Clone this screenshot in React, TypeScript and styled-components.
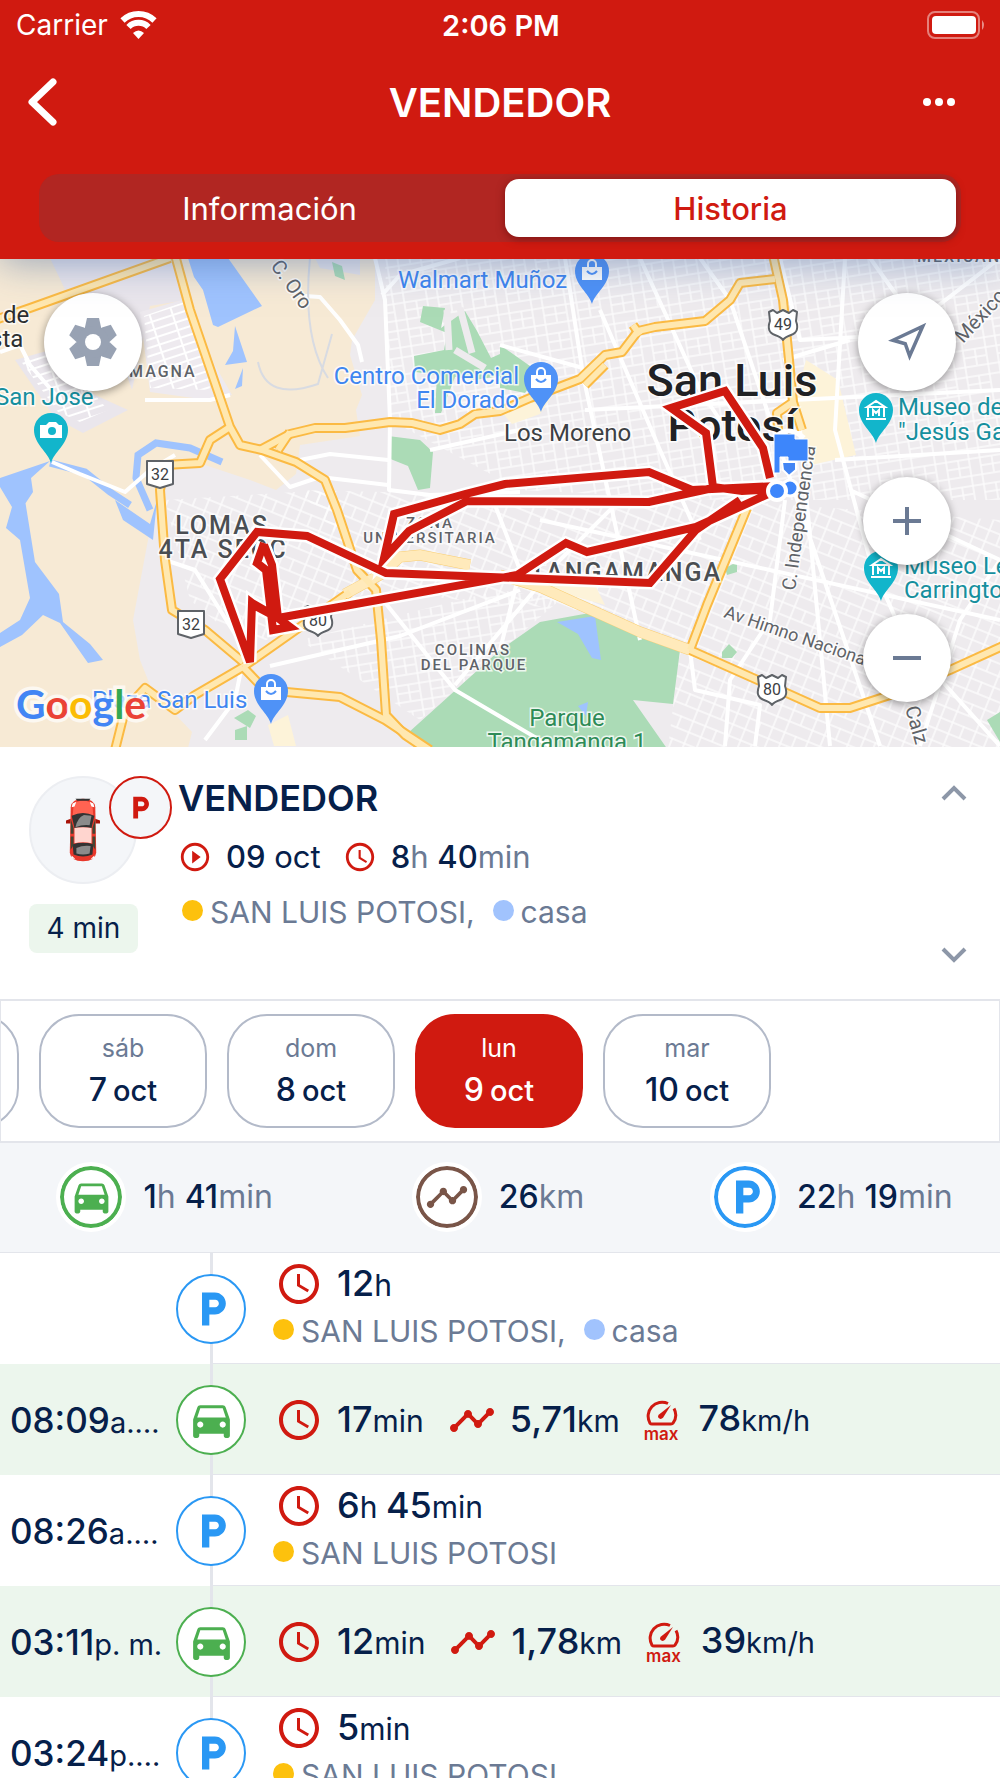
import React from "react";
import styled, { createGlobalStyle } from "styled-components";
import { MdAccessTime, MdDirectionsCar, MdLocalParking, MdPlayCircleOutline, MdTimeline } from "react-icons/md";

const color = {
  red: "#d01a10",
  navy: "#06204a",
  slate: "#6b7a94",
  line: "#e3e5eb",
  mist: "#f4f6f9",
  mint: "#ecf6ed",
  green: "#4caf50",
  blue: "#2a98f4",
  brown: "#795548",
  amber: "#fdc10d",
  sky: "#a1c3fd",
};

const GlobalStyle = createGlobalStyle`
  *, *::before, *::after { box-sizing: border-box; }
  body {
    margin: 0;
    background: #fff;
    color: ${color.navy};
    font-family: Inter, "Liberation Sans", sans-serif;
  }
  button { font: inherit; color: inherit; border: 0; padding: 0; background: none; cursor: pointer; }
  svg { display: block; flex: none; }
  h1, h2, p, ul, ol { margin: 0; padding: 0; }
  ul, ol { list-style: none; }
`;

const Screen = styled.div`
  display: flex;
  flex-direction: column;
  height: 100vh;
  overflow: hidden;
`;

/* Header */

const Header = styled.header`
  position: relative;
  z-index: 1;
  flex: none;
  height: 259px;
  background: ${color.red};
  color: #fff;
  box-shadow: 0 4px 36px rgba(60, 100, 160, 0.5);
`;

const StatusBar = styled.div`
  display: grid;
  grid-template-columns: 1fr auto 1fr;
  align-items: center;
  height: 50px;
  padding: 0 14px 0 16px;
  font-size: 28px;
`;

const Carrier = styled.div`
  display: flex;
  align-items: center;
  gap: 12px;
`;

const Clock = styled.time`
  font-size: 29px;
  font-weight: 600;
`;

const Battery = styled.svg`
  justify-self: end;
`;

const TitleBar = styled.div`
  display: grid;
  grid-template-columns: 1fr auto 1fr;
  align-items: center;
  height: 104px;
  padding: 0 26px;
`;

const Title = styled.h1`
  font-size: 40px;
  font-weight: 600;
`;

const IconButton = styled.button<{ $end?: boolean }>`
  justify-self: ${(p) => (p.$end ? "end" : "start")};
`;

const Segments = styled.div`
  display: grid;
  grid-template-columns: 1fr 1fr;
  gap: 10px;
  height: 68px;
  margin: 20px 39px 0;
  padding: 5px;
  border-radius: 20px;
  background: #b12622;
`;

const Segment = styled.button<{ $active?: boolean }>`
  border-radius: 14px;
  font-size: 31px;
  font-weight: ${(p) => (p.$active ? 500 : 400)};
  color: ${(p) => (p.$active ? color.red : "#fff")};
  background: ${(p) => (p.$active ? "#fff" : "transparent")};
  box-shadow: ${(p) => (p.$active ? "0 2px 8px rgba(80, 0, 0, 0.5)" : "none")};
`;

/* Map */

const MapPane = styled.section`
  position: relative;
  flex: none;
  height: 488px;
  overflow: hidden;
`;

const MapCanvas = styled.svg`
  width: 100%;
  height: 100%;
`;

const MapControls = styled.div`
  position: absolute;
  inset: 0;
  display: flex;
  justify-content: space-between;
  align-items: flex-start;
  padding: 34px 44px;
`;

const ControlColumn = styled.div`
  display: flex;
  flex-direction: column;
  align-items: center;
`;

const RoundButton = styled.button<{ $size: number; $gap?: number }>`
  display: grid;
  place-items: center;
  width: ${(p) => p.$size}px;
  height: ${(p) => p.$size}px;
  margin-top: ${(p) => p.$gap ?? 0}px;
  border-radius: 50%;
  background: #fff;
  box-shadow: 0 2px 8px rgba(0, 0, 0, 0.4);
`;

/* Vehicle summary */

const Summary = styled.section`
  display: flex;
  flex: none;
  height: 252px;
  padding: 29px 32px 0 29px;
`;

const AvatarColumn = styled.div`
  display: flex;
  flex-direction: column;
  gap: 20px;
  width: 109px;
`;

const Avatar = styled.div`
  position: relative;
  display: grid;
  place-items: center;
  width: 108px;
  height: 108px;
  border: 2px solid #eceef2;
  border-radius: 50%;
  background: ${color.mist};
`;

const ParkedBadge = styled.span`
  position: absolute;
  top: -2px;
  left: 78px;
  display: grid;
  place-items: center;
  width: 63px;
  height: 63px;
  border: 2px solid ${color.red};
  border-radius: 50%;
  background: ${color.mist};
  color: ${color.red};
`;

const Elapsed = styled.span`
  width: 100%;
  border-radius: 8px;
  background: ${color.mint};
  font-size: 28px;
  line-height: 49px;
  text-align: center;
`;

const SummaryText = styled.div`
  flex: 1;
  padding-left: 40px;
  & > p { padding-left: 4px; }
`;

const VehicleName = styled.h2`
  font-size: 36px;
  line-height: 44px;
  font-weight: 600;
`;

const MetaRow = styled.div`
  display: flex;
  align-items: center;
  gap: 14px;
  margin: 18px 0 17px;
  font-size: 31px;
  line-height: 38px;
  svg { color: ${color.red}; }
`;

const Meta = styled.span`
  margin-right: 8px;
`;

const Arrows = styled.div`
  display: flex;
  flex-direction: column;
  justify-content: space-between;
  padding: 8px 0 34px;
`;

const Unit = styled.span<{ $soft?: boolean; $size?: number }>`
  font-size: ${(p) => p.$size ?? 31}px;
  font-weight: 400;
  color: ${(p) => (p.$soft ? color.slate : color.navy)};
`;

const Num = styled.span`
  font-weight: 500;
`;

const Places = styled.p`
  display: flex;
  align-items: center;
  font-size: 30px;
  line-height: 38px;
  color: ${color.slate};
`;

const Place = styled.span<{ $dot: string }>`
  display: flex;
  align-items: center;
  margin-right: 18px;
  &::before {
    content: "";
    width: 21px;
    height: 21px;
    margin: 0 7px 4px 0;
    border-radius: 50%;
    background: ${(p) => p.$dot};
  }
`;

/* Day picker */

const DayStrip = styled.nav`
  flex: none;
  height: 144px;
  overflow: hidden;
  border: 1px solid ${color.line};
  border-width: 2px 1px;
`;

const Days = styled.ul`
  display: flex;
  gap: 20px;
  margin-left: -150px;
  padding-top: 13px;
`;

const Day = styled.button<{ $active?: boolean }>`
  display: flex;
  flex-direction: column;
  justify-content: center;
  align-items: center;
  gap: 7px;
  width: 168px;
  height: 114px;
  border: 2px solid ${(p) => (p.$active ? color.red : "#b3bac9")};
  border-radius: 40px;
  background: ${(p) => (p.$active ? color.red : "#fff")};
  color: ${(p) => (p.$active ? "#fff" : color.navy)};
  font-size: 29px;
  line-height: 38px;
  font-weight: 500;
`;

const Weekday = styled.span<{ $active?: boolean }>`
  font-size: 25px;
  line-height: 32px;
  font-weight: 400;
  color: ${(p) => (p.$active ? "#fff" : color.slate)};
`;

const DayDate = styled.span`
  display: flex;
  align-items: baseline;
  gap: 6px;
`;

const DayNumber = styled.span`
  font-size: 32px;
`;

/* Totals */

const Totals = styled.section`
  display: grid;
  grid-template-columns: repeat(3, 1fr);
  flex: none;
  height: 110px;
  border-bottom: 1px solid ${color.line};
  background: ${color.mist};
`;

const Total = styled.div`
  display: flex;
  justify-content: center;
  align-items: center;
  gap: 17px;
  padding: 0 4px 2px 0;
  font-size: 32px;
`;

const Ring = styled.span<{ $color: string; $bold?: boolean }>`
  position: relative;
  display: grid;
  place-items: center;
  flex: none;
  width: 70px;
  height: 70px;
  border: ${(p) => (p.$bold ? "4px solid #fff" : `2px solid ${p.$color}`)};
  border-radius: 50%;
  background: #fff;
  color: ${(p) => p.$color};
  box-shadow: ${(p) => (p.$bold ? `inset 0 0 0 4px ${p.$color}` : "none")};
`;

const ParkingIcon = styled(MdLocalParking)`
  margin-left: 4px;
`;

/* Timeline */

const Timeline = styled.ol`
  flex: 1;
  min-height: 0;
  overflow: hidden;
`;

const Entry = styled.li<{ $moving?: boolean }>`
  display: grid;
  grid-template-columns: 176px 70px 1fr;
  align-items: stretch;
  height: 111px;
  background: ${(p) => (p.$moving ? color.mint : "#fff")};
`;

const EntryTime = styled.time`
  align-self: center;
  padding-left: 10px;
  font-size: 35px;
  font-weight: 500;
  white-space: nowrap;
`;

const Rail = styled.div`
  display: grid;
  place-items: center;
  background: linear-gradient(${color.line}, ${color.line}) center / 3px 100% no-repeat;
`;

const EntryBody = styled.div`
  display: flex;
  flex-direction: column;
  justify-content: center;
  gap: 4px;
  margin-left: -34px;
  padding: 0 0 6px 61px;
  border-bottom: 1px solid ${color.line};
`;

const TripBody = styled(EntryBody)`
  padding: 1px 0 0 61px;
`;

const Metrics = styled.div`
  display: flex;
  align-items: center;
  gap: 24px;
  padding-left: 2px;
  font-size: 36px;
  line-height: 42px;
`;

const Metric = styled.span<{ $wide?: boolean }>`
  display: flex;
  align-items: center;
  gap: ${(p) => (p.$wide ? 20 : 14)}px;
  svg { color: ${color.red}; }
`;

const MaxSpeed = styled.span`
  display: flex;
  flex-direction: column;
  align-items: center;
  gap: 1px;
  padding-top: 2px;
  color: ${color.red};
  font-size: 17px;
  line-height: 15px;
  font-weight: 600;
`;

const Car = () => (
  <svg width="34" height="68" viewBox="0 0 36 68">
    <path d="M0 24l5-2v5H0zM36 24l-5-2v5h5z" fill="#a81208" />
    <path d="M5 10Q6 1 18 1t13 9l1 48q-1 9-14 9T4 58z" fill="#e8382b" />
    <path d="M8 8Q10 3 18 3t10 5l1 12Q18 13 7 20z" fill="#ff6352" />
    <path d="M10 1h16l-2 2H12z" fill="#333" />
    <path d="M6 19Q18 13 30 19l-3 13Q18 30 9 32zM7 49q11-3 22 0l-1 11q-10 4-20 0z" fill="#333" />
    <path d="M10 31q2-10 9-13l8 1-2 10Q18 28 10 31zM11 53q7-3 15-2l-1 8q-7 2-14 0z" fill="#8b8b8b" />
    <path d="M9 32q9-2 18 0v16q-9-2-18 0z" fill="#ffd5cf" />
    <path d="M5 22l3 10v6H5zM31 22l-3 10v6h3zM5 41h3v9l-3 5zM31 41h-3v9l3 5z" fill="#443" />
    <path d="M6 10l1-4 4-2-2 5zM30 10l-1-4-4-2 2 5zM6 61l4 4-4-1zM30 61l-4 4 4-1z" fill="#fff" />
  </svg>
);

const Gauge = () => (
  <svg width="33" height="26" viewBox="0 0 33 26" fill="none" stroke="currentColor" strokeWidth="3">
    <path d="M23 3.500A14 14 0 0 0 5 23.200q.7.8 2 .8h19q1.400 0 2-.8A14 14 0 0 0 29 8.500" />
    <path d="M26 5L14 14.500q-2 2 0 3.800 2 1.500 4-.5z" fill="currentColor" stroke="none" />
  </svg>
);

const Chevron = ({ down }: { down?: boolean }) => (
  <svg width="28" height="20" viewBox="0 0 28 20" fill="none" stroke="#8d97a8" strokeWidth="4">
    <path d={down ? "M3 4l11 11L25 4" : "M3 15L14 4l11 11"} />
  </svg>
);

const GearIcon = () => (
  <svg width="50" height="50" viewBox="-25 -25 50 50">
    <g fill="#98a2b3">
      {[0, 60, 120].map((a) => (
        <path key={a} transform={`rotate(${a})`} d="M-6-24h12l2 9v30l-2 9h-12l-2-9v-30z" />
      ))}
      <circle r="16" />
    </g>
    <circle r="8" fill="#fff" />
  </svg>
);

/* Map drawing */

const ARTERIES = [
  "M-5 320L30 308 170 258",
  "M175 255L190 310 230 427 240 445 262 450 296 462 325 480 337 510 357 570 376 590 381 640 386 715 405 735 430 752",
  "M260 450L290 434 315 428 345 428 390 422 412 423 440 430 460 424 475 414 500 411 530 398 580 379 605 355 622 352 638 331 655 327 705 321 730 300 740 283 775 279",
  "M278 450L290 432M605 365L585 385M633 325L640 335",
  "M230 427L210 440 200 463 165 465 160 490 165 560 172 610 205 630 243 662",
  "M243 667L265 690 340 697 385 720 430 750",
  "M243 667L195 695 175 710 145 688 125 710 120 730 115 750",
  "M243 667L310 620 350 592",
  "M773 255L783 300 789 360 793 402 802 430M793 402L777 413 778 430",
  "M747 508L707 605 690 650",
  "M690 650L780 690 820 708 850 708 890 695 950 670 1005 645",
];

const BOULEVARDS = "M345 594L380 575 400 557 420 555 470 565M500 575L540 587 640 632 690 650";

const STREETS =
  "M305 296L320 297 340 320 358 345 362 362M375 258L385 300 390 420 389 490 430 495 520 492M382 295L400 275 460 258M260 455L290 487 320 477 388 485M300 460L330 454 388 460M565 258L583 375 640 640M500 345L583 368M845 258L835 430 870 560 905 640 1000 746M700 258L730 300 880 746M0 352L20 345 30 365 60 400M52 462L80 474 125 492 150 470 175 455M165 560L195 570 245 650 235 700 205 740M430 450L520 430M585 410L1000 390M835 460L1000 450M540 520L1000 620M455 685L560 560 620 500M270 666L400 636 520 590M145 400L210 400 230 395M490 492L520 570 500 650M690 650L695 690 760 705 755 746M780 258L800 340 900 335 1000 258M850 490L1000 560M870 258L900 300 905 390M920 746L960 620 1000 560M783 360L850 340M800 430L830 746M375 590L455 690 550 746M600 310L660 450 700 540M640 258L700 390 720 420M785 500L770 620 730 680 725 746";

const ROUTE =
  "M777 489L742 491 713 487 706 433 671 408 725 391 763 448 770 478M777 486L692 490 649 472 505 484 465 494 394 514 384 558 409 531 467 501 649 502 713 488M777 490L696 527 587 552 566 543 517 575 278 618 257 607 252 603 250 662 220 579 257 532 307 536 386 573 650 583 696 530 740 500M264 543L257 563 266 570 273 630 290 627 278 618 272 565 264 545M252 603L285 622";

const Halo = styled.text<{ $size: number; $fill: string; $weight?: number; $spaced?: boolean }>`
  font-family: Roboto, "Liberation Sans", sans-serif;
  font-size: ${(p) => p.$size}px;
  font-weight: ${(p) => p.$weight ?? 400};
  letter-spacing: ${(p) => (p.$spaced ? 2 : 0)}px;
  fill: ${(p) => p.$fill};
  stroke: #fff;
  stroke-width: 3px;
  stroke-opacity: 0.8;
  paint-order: stroke;
`;

const Logo = styled.text`
  font-family: Lato, "Liberation Sans", sans-serif;
  font-size: 41px;
  font-weight: 700;
  stroke: rgba(255, 255, 255, 0.7);
  stroke-width: 7px;
  paint-order: stroke;
`;

const Pin = ({ x, y, kind }: { x: number; y: number; kind: "bag" | "camera" | "museum" }) => (
  <g transform={`translate(${x} ${y})`}>
    <path
      d="M0 33C-3 22-17 14-17 0a17 17 0 1 1 34 0C17 14 3 22 0 33z"
      fill={kind === "bag" ? "#4f92f7" : "#12b5cb"}
    />
    {kind === "bag" && (
      <g>
        <path d="M-10-4h20V9h-20z" fill="#fff" />
        <path d="M-4-4v-3a4 4 0 0 1 8 0v3" fill="none" stroke="#fff" strokeWidth="2" />
        <path d="M-5 0q5 6 10 0" fill="none" stroke="#4f92f7" strokeWidth="2" />
      </g>
    )}
    {kind === "camera" && (
      <g>
        <path d="M-11-5h6l3-3h7l3 3h3v13h-22z" fill="#fff" />
        <circle cx="1" cy="1" r="4" fill="#12b5cb" />
      </g>
    )}
    {kind === "museum" && (
      <path d="M-9-3L0-9l9 6zM-8-2V7M8-2V7M-10 9h20M-3 6V0l3 3 3-3v6" fill="none" stroke="#fff" strokeWidth="2" />
    )}
  </g>
);

const Shield = ({ x, y, n, us }: { x: number; y: number; n: string; us?: boolean }) => (
  <g transform={`translate(${x} ${y})`}>
    <path
      d={us ? "M-14-12l4-2 4 3 6-3 6 3 4-3 4 2-1 9q4 11-5 14-6 2-8 5-2-3-8-5-9-3-5-14z" : "M-13-13h26v23L0 14l-13-4z"}
      fill="#fff"
      stroke="#5f6368"
      strokeWidth="2"
      strokeLinejoin="round"
    />
    <Halo y="6" textAnchor="middle" $size={16} $fill="#3c4043">{n}</Halo>
  </g>
);

const CityMap = () => (
  <MapCanvas viewBox="0 259 1000 488" preserveAspectRatio="xMidYMid slice" role="img" aria-label="San Luis Potosí">
    <defs>
      <pattern id="blocks" width="34" height="27" patternUnits="userSpaceOnUse" patternTransform="rotate(-9)">
        <path d="M0 1h34M1 0v27M12 0v27M0 11h34M24 11v16M12 19h22" stroke="#fff" strokeOpacity="0.8" strokeWidth="1.500" fill="none" />
      </pattern>
      <pattern id="slanted" width="38" height="24" patternUnits="userSpaceOnUse" patternTransform="rotate(22)">
        <path d="M0 1h38M1 0v24M14 0v24M0 13h38M26 0v13" stroke="#fff" strokeOpacity="0.8" strokeWidth="1.500" fill="none" />
      </pattern>
      <pattern id="lots" width="22" height="8" patternUnits="userSpaceOnUse" patternTransform="rotate(-18)">
        <path d="M0 1h22M1 0v8" stroke="#fff" strokeWidth="2" fill="none" />
      </pattern>
    </defs>
    <path d="M0 258h1000v490H0z" fill="#eeebee" />
    <path d="M385 258H1000V500H720L520 490 390 420z" fill="url(#blocks)" />
    <path d="M300 490L720 500 1000 520V748H668L680 650 600 612 460 600 380 590z" fill="url(#slanted)" />
    <path d="M165 500L330 490 375 590 300 620 250 650 190 600z" fill="url(#slanted)" />
    <path d="M300 640L500 590 560 600 420 720z" fill="url(#blocks)" />
    <path
      d="M0 258H375V300L352 340 350 355 362 395 356 410 360 436 300 445 296 474 276 490 250 480 190 460 160 480 148 540 133 620 140 660 152 690 192 732 188 748H0z"
      fill="#f7ead5"
    />
    <path d="M50 258H172L186 300 150 306 132 390 100 300 70 300z" fill="#eae6ec" />
    <path d="M140 312L185 299 212 360 232 395 208 400 150 392z" fill="#eeeaef" />
    <path d="M144 316L184 302 208 360 210 390 150 388z" fill="url(#lots)" />
    <path d="M15 360L50 350 95 395 128 410 83 433 55 418z" fill="#eae6ec" />
    <path d="M20 360L50 352 95 395 108 410 80 422 58 412z" fill="url(#lots)" />
    <path d="M315 258H360V275L320 268z" fill="#e8e5ea" />
    <g fill="#9fc3fe">
      <path d="M188 258h40l34 48-44 21-5-2-10-35-9-13zM235 326l12 36-22 3 8-14zM243 368l-8 21 7-3z" />
      <path d="M0 478l50-17-19 17 2 14-8 12 0-4 10 62 24 32 4 28 27 22 13 16-15 3-28-40-17-8-21 20-22 12v-14l20-13 10-22-10-58-14-12 6-21-12-20z" />
      <path d="M115 500l35 24 7-24-4 40-30-20z" />
    </g>
    <path d="M50 463L85 472 110 492 130 505M150 510L136 478 138 455 156 443 190 448 222 462" fill="none" stroke="#9fc3fe" strokeWidth="7" />
    <g fill="#abdbb6">
      <path d="M423 306l22 2-4 20 24-17 12 20 14 27 9-4v22l-26 4-19-3-14 36h-6l2-38-22-3-1-16 30-6 3-17-27-11z" />
      <path d="M388 436l32 4 13 12-3 36-12 2-10-24-20-8zM332 262l10 4 3 14-10-4zM500 345l40 28-15 20-25-5zM234 718l14-8 8 6-6 12zM235 730l12-4v14h-12zM725 568l12-6v10l-10 3zM722 652l7-8 8 8-5 6h-10zM987 720l13-8v30z" />
      <path d="M408 733l22 17h238l-35-50 40 4 7-54-47-18-38-20-55 10-40 28z" />
    </g>
    <path d="M557 622l38-6 6 44-9-2-14-24zM578 706l10-4-2 14z" fill="#9fc3fe" />
    <path d="M447 310l2 40M460 308l12 45M455 350l30 18" stroke="#eeebee" strokeWidth="7" fill="none" />
    <path d="M806 360l32 20 18 75-45 10-20-50zM535 585l60 0 10 20zM500 410l60-26-20 30-28 10zM268 725l20-10 8 31h-22z" fill="#fdf3d9" />
    <path d={STREETS} fill="none" stroke="#fff" strokeWidth="4" strokeLinejoin="round" />
    <path d="M258 362q8 40 60 22l14-50M310 258q-8 80 18 120" fill="none" stroke="#d8dbe2" strokeWidth="2" />
    {ARTERIES.map((d) => (
      <path key={d} d={d} fill="none" stroke="#fbba43" strokeWidth="10" strokeLinejoin="round" />
    ))}
    <path d={BOULEVARDS} fill="none" stroke="#f9ce73" strokeWidth="11" />
    <path d={BOULEVARDS} fill="none" stroke="#ffeabb" strokeWidth="10" />
    {ARTERIES.map((d) => (
      <path key={d} d={d} fill="none" stroke="#ffe8b0" strokeWidth="6" strokeLinejoin="round" />
    ))}

    <Shield x={160} y={474} n="32" />
    <Shield x={191} y={624} n="32" />
    <Shield x={783} y={324} n="49" us />
    <Shield x={318} y={620} n="80" us />
    <Shield x={772} y={689} n="80" us />

    <Halo x="3" y="323" $size={24} $fill="#2d2f31">de</Halo>
    <Halo x="-10" y="347" $size={24} $fill="#2d2f31">sta</Halo>
    <Halo x="129" y="377" $size={16} $weight={500} $fill="#5f6368" $spaced>MAGNA</Halo>
    <Halo x="-5" y="405" $size={24} $fill="#168f9e">San José</Halo>
    <Halo transform="translate(270 266) rotate(54)" $size={20} $fill="#5f6368">C. Oro</Halo>
    <Halo x="398" y="288" $size={24} $fill="#3f86f0">Walmart Muñoz</Halo>
    <Halo x="519" y="384" textAnchor="end" $size={24} $fill="#3f86f0">Centro Comercial</Halo>
    <Halo x="519" y="408" textAnchor="end" $size={24} $fill="#3f86f0">El Dorado</Halo>
    <Halo x="504" y="441" $size={24} $fill="#3c4043">Los Moreno</Halo>
    <Halo x="732" y="396" textAnchor="middle" $size={45} $weight={500} $fill="#202124">San Luis</Halo>
    <Halo x="732" y="441" textAnchor="middle" $size={45} $weight={500} $fill="#202124">Potosí</Halo>
    <Halo x="898" y="415" $size={24} $fill="#168f9e">Museo de</Halo>
    <Halo x="898" y="440" $size={24} $fill="#168f9e">"Jesús Gar</Halo>
    <Halo x="904" y="574" $size={24} $fill="#168f9e">Museo Leo</Halo>
    <Halo x="904" y="598" $size={24} $fill="#168f9e">Carrington</Halo>
    <Halo x="917" y="262" $size={16} $weight={500} $fill="#5f6368" $spaced>MEXICANA</Halo>
    <Halo transform="translate(963 344) rotate(-47)" $size={20} $fill="#5f6368">México</Halo>
    <Halo transform="translate(795 591) rotate(-82)" $size={19} $fill="#5f6368">C. Independencia</Halo>
    <Halo transform="translate(723 617) rotate(19)" $size={18} $fill="#5f6368">Av Himno Nacional</Halo>
    <Halo transform="translate(905 708) rotate(74)" $size={20} $fill="#5f6368">Calz de</Halo>
    <Halo x="222" y="534" textAnchor="middle" $size={25} $weight={500} $fill="#4a4e52" $spaced>LOMAS</Halo>
    <Halo x="223" y="558" textAnchor="middle" $size={25} $weight={500} $fill="#4a4e52" $spaced>4TA SECC</Halo>
    <Halo x="430" y="528" textAnchor="middle" $size={15} $weight={500} $fill="#5f6368" $spaced>ZONA</Halo>
    <Halo x="430" y="543" textAnchor="middle" $size={15} $weight={500} $fill="#5f6368" $spaced>UNIVERSITARIA</Halo>
    <Halo x="722" y="581" textAnchor="end" $size={25} $weight={500} $fill="#4a4e52" $spaced>TANGAMANGA</Halo>
    <Halo x="473" y="655" textAnchor="middle" $size={15} $weight={500} $fill="#5f6368" $spaced>COLINAS</Halo>
    <Halo x="474" y="670" textAnchor="middle" $size={15} $weight={500} $fill="#5f6368" $spaced>DEL PARQUE</Halo>
    <Halo x="567" y="726" textAnchor="middle" $size={24} $fill="#2e8b57">Parque</Halo>
    <Halo x="567" y="750" textAnchor="middle" $size={24} $fill="#2e8b57">Tangamanga 1</Halo>
    <Halo x="92" y="708" $size={24} $fill="#3f86f0">Plaza San Luis</Halo>

    <Pin x={592} y={271} kind="bag" />
    <Pin x={541} y={379} kind="bag" />
    <Pin x={271} y={691} kind="bag" />
    <Pin x={51} y={430} kind="camera" />
    <Pin x={876} y={410} kind="museum" />
    <Pin x={881} y={568} kind="museum" />

    <path d={ROUTE} fill="none" stroke="#fff" strokeWidth="13" />
    <path d={ROUTE} fill="none" stroke={color.red} strokeWidth="8" />

    <path d="M774 438q14-14 30 0" fill="none" stroke="#fff" strokeWidth="5" />
    <path d="M782 462h14v8l-7 6-6-6z" fill="#4285f4" stroke="#fff" strokeWidth="2" />
    <path d="M774 434h21v5h13v22h-20v-4h-8v16h-6z" fill="#3d86fb" stroke="#fff" strokeWidth="1" />
    <circle cx="790" cy="488" r="8" fill="#3d86fb" stroke="#fff" strokeWidth="3" />
    <circle cx="777" cy="491" r="9" fill="#3d86fb" stroke="#fff" strokeWidth="4" />

    <Logo x="16" y="719">
      <tspan fill="#4285f4">G</tspan>
      <tspan fill="#ea4335">o</tspan>
      <tspan fill="#fbbc05">o</tspan>
      <tspan fill="#4285f4">g</tspan>
      <tspan fill="#34a853">l</tspan>
      <tspan fill="#ea4335">e</tspan>
    </Logo>
  </MapCanvas>
);

/* "8h 40min" and similar: digits are emphasised, units are lighter. */
const Value = ({ text, soft, unitSize }: { text: string; soft?: boolean; unitSize?: number }) => (
  <span>
    {(text.match(/[\d,]+|[^\d,]+/g) ?? []).map((part, i) =>
      /\d/.test(part) ? (
        <Num key={i}>{part}</Num>
      ) : (
        <Unit key={i} $soft={soft} $size={unitSize}>{part}</Unit>
      ),
    )}
  </span>
);

const DAYS = [
  { id: "6 oct" },
  { id: "7 oct", weekday: "sáb", day: "7" },
  { id: "8 oct", weekday: "dom", day: "8" },
  { id: "9 oct", weekday: "lun", day: "9", active: true },
  { id: "10 oct", weekday: "mar", day: "10" },
];

type Row = {
  time?: string;
  suffix?: string;
  duration: string;
  home?: boolean;
  distance?: string;
  speed?: string;
};

const ROWS: Row[] = [
  { duration: "12h", home: true },
  { time: "08:09", suffix: "a.…", duration: "17min", distance: "5,71km", speed: "78km/h" },
  { time: "08:26", suffix: "a.…", duration: "6h 45min" },
  { time: "03:11", suffix: "p. m.", duration: "12min", distance: "1,78km", speed: "39km/h" },
  { time: "03:24", suffix: "p.…", duration: "5min" },
];

const PlaceList = ({ home }: { home?: boolean }) => (
  <Places>
    <Place $dot={color.amber}>SAN LUIS POTOSI{home ? "," : ""}</Place>
    {home && <Place $dot={color.sky}>casa</Place>}
  </Places>
);

const TimelineRow = ({ row }: { row: Row }) => {
  const moving = Boolean(row.distance);
  const Body = moving ? TripBody : EntryBody;
  return (
    <Entry $moving={moving}>
      <EntryTime>
        {row.time}
        {row.suffix && <Unit $size={29}>{row.suffix}</Unit>}
      </EntryTime>
      <Rail>
        <Ring $color={moving ? color.green : color.blue}>
          {moving ? <MdDirectionsCar size={49} /> : <ParkingIcon size={44} />}
        </Ring>
      </Rail>
      <Body>
        <Metrics>
          <Metric>
            <MdAccessTime size={48} />
            <Value text={row.duration} unitSize={30} />
          </Metric>
          {row.distance && (
            <Metric>
              <MdTimeline size={48} />
              <Value text={row.distance} unitSize={30} />
            </Metric>
          )}
          {row.speed && (
            <Metric $wide>
              <MaxSpeed>
                <Gauge />
                max
              </MaxSpeed>
              <Value text={row.speed} unitSize={29} />
            </Metric>
          )}
        </Metrics>
        {!moving && <PlaceList home={row.home} />}
      </Body>
    </Entry>
  );
};

export default function App() {
  return (
    <Screen>
      <GlobalStyle />
      <Header>
        <StatusBar>
          <Carrier>
            Carrier
            <svg width="37" height="28" viewBox="0 0 37 28" fill="none" stroke="#fff" strokeWidth="6">
              <path d="M2.500 9.500a23 23 0 0 1 32 0M8.500 16a14 14 0 0 1 20 0" />
              <path d="M13 22q5.500-5 11 0l-5.500 6z" fill="#fff" stroke="none" />
            </svg>
          </Carrier>
          <Clock>2:06 PM</Clock>
          <Battery width="59" height="28" viewBox="0 0 59 28">
            <rect x="1" y="1" width="51" height="26" rx="7" fill="none" stroke="#fff" strokeOpacity="0.45" strokeWidth="2" />
            <rect x="5" y="5" width="44" height="18" rx="4" fill="#fff" />
            <path d="M55 9q4 5 0 10z" fill="#fff" fillOpacity="0.5" />
          </Battery>
        </StatusBar>
        <TitleBar>
          <IconButton aria-label="Atrás">
            <svg width="34" height="50" viewBox="0 0 34 50" fill="none" stroke="#fff" strokeWidth="7" strokeLinecap="round" strokeLinejoin="round">
              <path d="M27 5L6 25l21 20" />
            </svg>
          </IconButton>
          <Title>VENDEDOR</Title>
          <IconButton $end aria-label="Más">
            <svg width="52" height="20" viewBox="0 0 52 20" fill="#fff">
              <circle cx="5" cy="10" r="4" />
              <circle cx="17" cy="10" r="4" />
              <circle cx="29" cy="10" r="4" />
            </svg>
          </IconButton>
        </TitleBar>
        <Segments>
          <Segment>Información</Segment>
          <Segment $active>Historia</Segment>
        </Segments>
      </Header>

      <MapPane>
        <CityMap />
        <MapControls>
          <RoundButton $size={98} aria-label="Ajustes">
            <GearIcon />
          </RoundButton>
          <ControlColumn>
            <RoundButton $size={98} aria-label="Centrar">
              <svg width="42" height="42" viewBox="0 0 24 24" fill="none" stroke="#6b7a94" strokeWidth="2">
                <path d="M4 11L21 3l-7.500 17-2.500-7z" />
              </svg>
            </RoundButton>
            <RoundButton $size={88} $gap={86} aria-label="Acercar">
              <svg width="30" height="30" viewBox="0 0 30 30" stroke="#6b7a94" strokeWidth="4">
                <path d="M1 15h28M15 1v28" />
              </svg>
            </RoundButton>
            <RoundButton $size={88} $gap={49} aria-label="Alejar">
              <svg width="30" height="30" viewBox="0 0 30 30" stroke="#6b7a94" strokeWidth="4">
                <path d="M1 15h28" />
              </svg>
            </RoundButton>
          </ControlColumn>
        </MapControls>
      </MapPane>

      <Summary>
        <AvatarColumn>
          <Avatar>
            <Car />
            <ParkedBadge>
              <MdLocalParking size={29} />
            </ParkedBadge>
          </Avatar>
          <Elapsed>4 min</Elapsed>
        </AvatarColumn>
        <SummaryText>
          <VehicleName>VENDEDOR</VehicleName>
          <MetaRow>
            <MdPlayCircleOutline size={34} />
            <Meta><Value text="09 oct" /></Meta>
            <MdAccessTime size={34} />
            <Value text="8h 40min" soft />
          </MetaRow>
          <PlaceList home />
        </SummaryText>
        <Arrows>
          <IconButton aria-label="Anterior"><Chevron /></IconButton>
          <IconButton aria-label="Siguiente"><Chevron down /></IconButton>
        </Arrows>
      </Summary>

      <DayStrip>
        <Days>
          {DAYS.map((d) => (
            <li key={d.id}>
              <Day $active={d.active} aria-label={d.id}>
                {d.day && (
                  <>
                    <Weekday $active={d.active}>{d.weekday}</Weekday>
                    <DayDate>
                      <DayNumber>{d.day}</DayNumber> oct
                    </DayDate>
                  </>
                )}
              </Day>
            </li>
          ))}
        </Days>
      </DayStrip>

      <Totals>
        <Total>
          <Ring $color={color.green} $bold><MdDirectionsCar size={45} /></Ring>
          <Value text="1h 41min" soft unitSize={32} />
        </Total>
        <Total>
          <Ring $color={color.brown} $bold><MdTimeline size={44} /></Ring>
          <Value text="26km" soft unitSize={32} />
        </Total>
        <Total>
          <Ring $color={color.blue} $bold><ParkingIcon size={44} /></Ring>
          <Value text="22h 19min" soft unitSize={32} />
        </Total>
      </Totals>

      <Timeline>
        {ROWS.map((row, i) => (
          <TimelineRow key={i} row={row} />
        ))}
      </Timeline>
    </Screen>
  );
}
